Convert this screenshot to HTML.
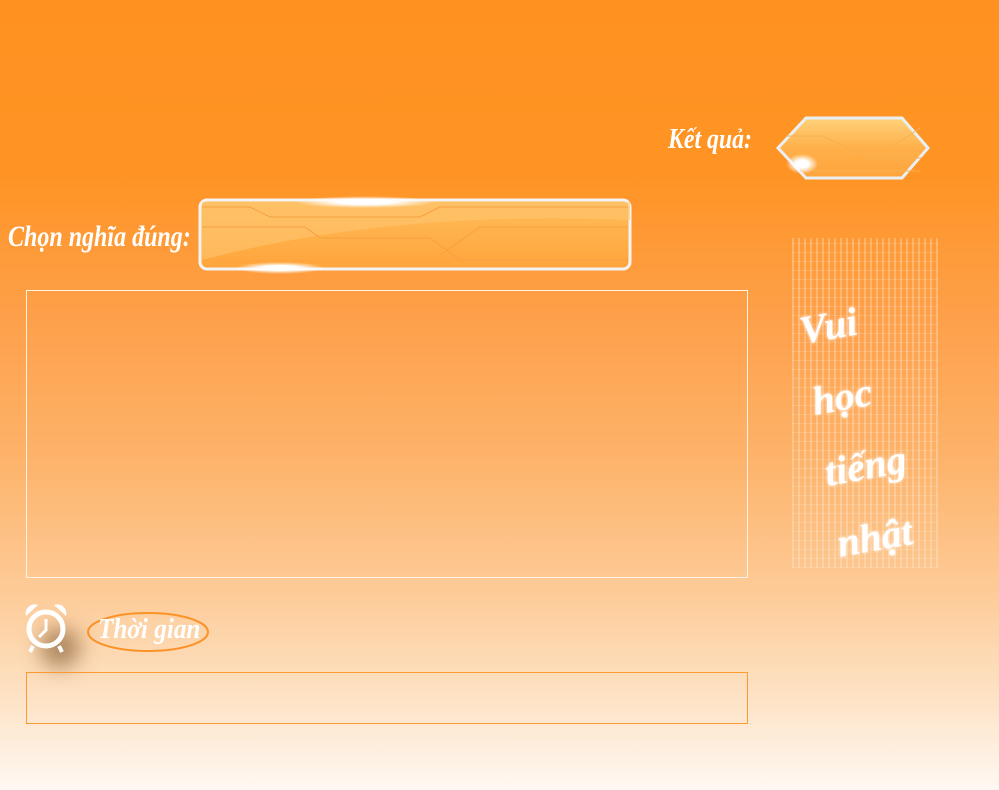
<!DOCTYPE html>
<html><head><meta charset="utf-8">
<style>
html,body{margin:0;padding:0}
body{width:999px;height:790px;position:relative;overflow:hidden;
background:linear-gradient(180deg,#ff9120 0%,#ff9424 22%,#fea04a 40%,#fdb36a 58%,#fdcb98 75%,#fde2c4 88%,#fff8f2 100%);
font-family:"Liberation Serif",serif}
.lbl{position:absolute;color:#fff;font-style:italic;font-weight:bold;font-family:"Liberation Serif","DejaVu Serif",serif;transform-origin:left top}
.box{position:absolute;border:1.5px solid #fff3e6}
</style></head><body>
<div class="lbl" style="left:668px;top:124px;font-size:28px;transform:scaleX(.85)">Kết quả:</div>
<svg style="position:absolute;left:772px;top:114px" width="160" height="68">
<defs><linearGradient id="g1" x1="0" y1="0" x2="0" y2="1"><stop offset="0" stop-color="#ffd27a"/><stop offset=".5" stop-color="#ffb04a"/><stop offset="1" stop-color="#ffa43c"/></linearGradient>
<radialGradient id="gl"><stop offset="0" stop-color="#fff"/><stop offset=".4" stop-color="#fff"/><stop offset="1" stop-color="#fff" stop-opacity="0"/></radialGradient></defs>
<polygon points="34,4 130,4 156,34 130,64 34,64 6,34" fill="url(#g1)" stroke="#e8f0f4" stroke-width="3"/>
<path d="M14,22 L50,22 L98,44 L150,44 M118,34 L148,14 M28,57 L148,57" stroke="#f5b050" fill="none"/>
<ellipse cx="30" cy="50" rx="16" ry="10" fill="url(#gl)"/>
</svg>
<div class="lbl" style="left:8px;top:220px;font-size:30px;transform:scaleX(.8)">Chọn nghĩa đúng:</div>
<svg style="position:absolute;left:190px;top:190px" width="450" height="90">
<defs><linearGradient id="g2" x1="0" y1="0" x2="0" y2="1"><stop offset="0" stop-color="#ffbd5a"/><stop offset="1" stop-color="#ffa43a"/></linearGradient>
<radialGradient id="gl2"><stop offset="0" stop-color="#fff"/><stop offset=".4" stop-color="#fff"/><stop offset="1" stop-color="#fff" stop-opacity="0"/></radialGradient></defs>
<rect x="10" y="10" width="430" height="69" rx="7" fill="url(#g2)" stroke="#f4f4f4" stroke-width="3"/>
<path d="M12,70 Q200,20 440,30 L440,12 L12,12 Z" fill="#ffc470" opacity=".6"/>
<path d="M12,17 L60,17 L80,27 L230,27 L250,17 L438,17 M12,37 L115,37 L130,48 L240,48 L270,70 L438,70 M250,65 L290,37 L438,37" stroke="#f5a040" fill="none"/>
<ellipse cx="175" cy="12" rx="70" ry="6" fill="url(#gl2)"/>
<ellipse cx="90" cy="78" rx="45" ry="6" fill="url(#gl2)"/>
</svg>
<div class="box" style="left:26px;top:290px;width:720px;height:286px"></div>
<div style="position:absolute;left:792px;top:238px;width:146px;height:330px;background:repeating-linear-gradient(90deg,rgba(255,240,220,.3) 0 2px,transparent 2px 6px),repeating-linear-gradient(0deg,rgba(255,240,220,.2) 0 1px,transparent 1px 9px)"></div>
<div style="position:absolute;left:818px;top:285px;width:100px;color:#fff;font-style:italic;font-weight:bold;font-size:40px;line-height:72px;transform:rotate(-10deg);text-shadow:0 0 3px #fff">Vui<br>học<br>tiếng<br>nhật</div>
<div style="position:absolute;left:40px;top:628px;width:40px;height:40px;border-radius:50%;background:rgba(110,70,30,.55);filter:blur(10px)"></div>
<svg style="position:absolute;left:22px;top:600px" width="50" height="54">
<circle cx="24" cy="29" r="17" fill="none" stroke="#fff" stroke-width="5"/>
<path d="M4,16 A9,9 0 0 1 16,5 Z M44,16 A9,9 0 0 0 32,5 Z" fill="#fff"/>
<path d="M24,19 V30 L17,37" stroke="#fff" stroke-width="3" fill="none"/>
<path d="M11,46 L8,52 M37,46 L40,52" stroke="#fff" stroke-width="4"/>
</svg>
<svg style="position:absolute;left:85px;top:611px" width="126" height="44"><ellipse cx="63" cy="21" rx="60" ry="19" fill="none" stroke="#fb9228" stroke-width="2"/></svg>
<div class="lbl" style="left:98px;top:614px;font-size:28px;transform:scaleX(.9)">Thời gian</div>
<div style="position:absolute;left:26px;top:672px;width:720px;height:50px;border:1.5px solid #fb9a30"></div>
</body></html>
